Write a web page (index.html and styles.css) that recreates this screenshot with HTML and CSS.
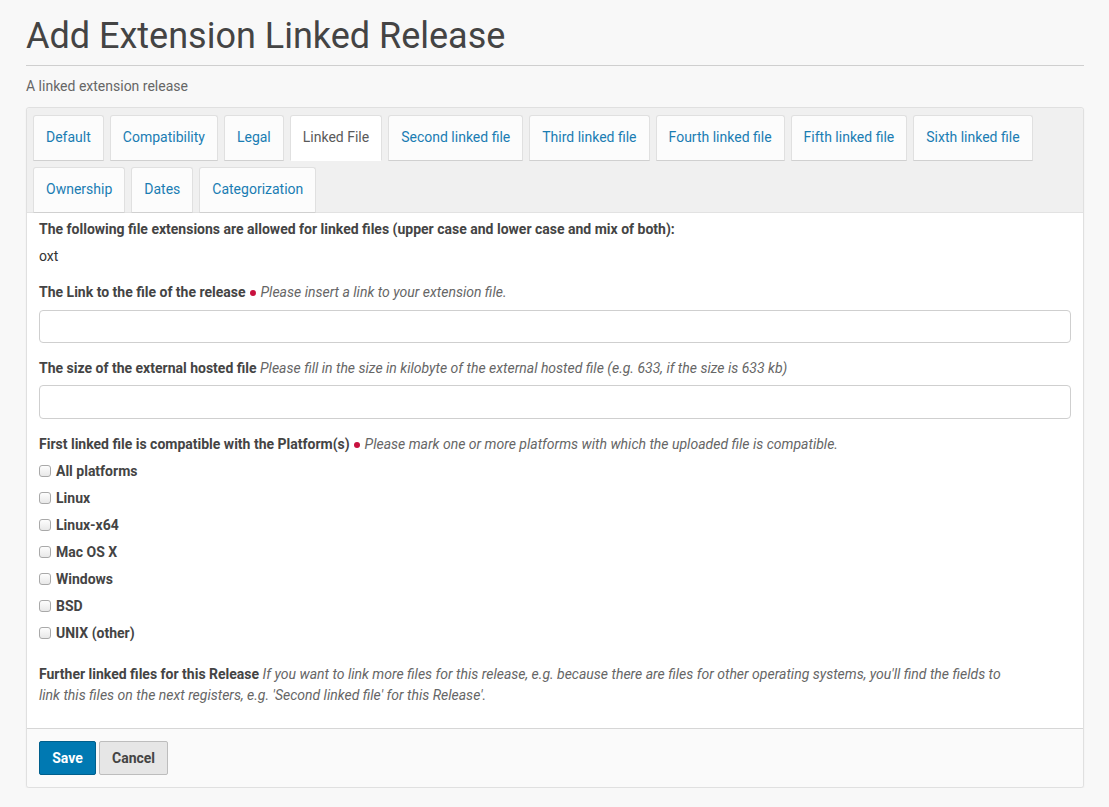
FILE: index.html
```html
<!DOCTYPE html>
<html>
<head>
<meta charset="utf-8">
<link rel="stylesheet" href="styles.css">
</head>
<body>
<div class="page">
  <h1 class="title">Add Extension Linked Release</h1>
  <p class="subtitle">A linked extension release</p>
  <div class="panel">
    <div class="tabs">
      <a class="tab">Default</a>
      <a class="tab">Compatibility</a>
      <a class="tab">Legal</a>
      <a class="tab active">Linked File</a>
      <a class="tab">Second linked file</a>
      <a class="tab">Third linked file</a>
      <a class="tab">Fourth linked file</a>
      <a class="tab">Fifth linked file</a>
      <a class="tab">Sixth linked file</a>
      <a class="tab">Ownership</a>
      <a class="tab">Dates</a>
      <a class="tab">Categorization</a>
    </div>
    <div class="content">
      <p class="label first">The following file extensions are allowed for linked files (upper case and lower case and mix of both):</p>
      <p class="oxt">oxt</p>
      <p class="label gap16">The Link to the file of the release <span class="req"></span> <em>Please insert a link to your extension file.</em></p>
      <input class="field" type="text">
      <p class="label gap15">The size of the external hosted file <em>Please fill in the size in kilobyte of the external hosted file (e.g. 633, if the size is 633 kb)</em></p>
      <input class="field field2" type="text">
      <p class="label gap15">First linked file is compatible with the Platform(s) <span class="req"></span> <em>Please mark one or more platforms with which the uploaded file is compatible.</em></p>
      <label class="check"><input type="checkbox"><span>All platforms</span></label>
      <label class="check"><input type="checkbox"><span>Linux</span></label>
      <label class="check"><input type="checkbox"><span>Linux-x64</span></label>
      <label class="check"><input type="checkbox"><span>Mac OS X</span></label>
      <label class="check"><input type="checkbox"><span>Windows</span></label>
      <label class="check"><input type="checkbox"><span>BSD</span></label>
      <label class="check"><input type="checkbox"><span>UNIX (other)</span></label>
      <p class="label further">Further linked files for this Release <em>If you want to link more files for this release, e.g. because there are files for other operating systems, you'll find the fields to link this files on the next registers, e.g. 'Second linked file' for this Release'.</em></p>
    </div>
    <div class="footer">
      <button class="btn save">Save</button>
      <button class="btn cancel">Cancel</button>
    </div>
  </div>
</div>
</body>
</html>
```
FILE: styles.css
```css
html, body {
  margin: 0;
  padding: 0;
  background: #f8f8f8;
  font-family: Roboto, "Liberation Sans", sans-serif;
  color: #333;
}
.page {
  padding: 0 25px 0 26px;
}
.title {
  margin: 16px 0 0;
  font-size: 36px;
  line-height: 40px;
  font-weight: 400;
  color: #444;
  padding-bottom: 9px;
  border-bottom: 1px solid #cfcfcf;
}
.subtitle {
  margin: 10px 0 0;
  font-size: 14px;
  line-height: 20px;
  color: #666;
}
.panel {
  margin-top: 11px;
  border: 1px solid #e0e0e0;
  border-radius: 3px;
  background: #fafafa;
  box-shadow: 0 1px 2px rgba(0,0,0,0.06);
}
.tabs {
  display: flex;
  flex-wrap: wrap;
  gap: 7px 6px;
  padding: 7px 6px 0;
  background: #f0f0f0;
  border-bottom: 1px solid #e2e2e2;
  border-radius: 3px 3px 0 0;
}
.tab {
  display: block;
  padding: 11px 12px 13px;
  font-size: 14px;
  line-height: 20px;
  color: #1a7db3;
  background: #fcfcfc;
  border: 1px solid #e0e0e0;
  border-bottom-color: #d0d0d0;
  border-radius: 3px 3px 0 0;
  margin-bottom: -1px;
}
.tab.active {
  background: #fff;
  color: #5a5a5a;
  border-bottom-color: #fff;
}
.content {
  background: #fff;
  padding: 6px 12px 22px;
  border-bottom: 1px solid #d6d6d6;
}
.label {
  margin: 0;
  font-size: 14px;
  line-height: 20px;
  font-weight: 700;
  color: #444;
}
.label em {
  font-weight: 400;
  color: #666;
}
.oxt {
  margin: 7px 0 0;
  font-size: 14px;
  line-height: 20px;
  color: #333;
}
.gap16 { margin-top: 16px; }
.gap15 { margin-top: 15px; }
.req {
  display: inline-block;
  width: 6px;
  height: 6px;
  border-radius: 50%;
  background: #c8103e;
  vertical-align: 1px;
  margin: 0 1px 0 1px;
}
.field {
  display: block;
  box-sizing: border-box;
  width: 100%;
  height: 33px;
  margin-top: 8px;
  border: 1px solid #cfcfcf;
  border-radius: 4px;
  background: #fff;
}
.field2 {
  margin-top: 7px;
  height: 34px;
}
.check {
  display: flex;
  align-items: center;
  margin-top: 7px;
  font-size: 14px;
  line-height: 20px;
  font-weight: 700;
  color: #444;
}
.check input {
  appearance: none;
  -webkit-appearance: none;
  width: 12px;
  height: 12px;
  margin: 0 5px 0 0;
  border: 1px solid #a9a9a9;
  border-radius: 3px;
  background: linear-gradient(#fdfdfd, #e8e8e8);
  box-sizing: border-box;
}
.further {
  margin-top: 21px;
  line-height: 21px;
  padding-right: 70px;
}
.footer {
  display: flex;
  gap: 3px;
  padding: 12px 12px 12px;
  background: #fafafa;
  border-radius: 0 0 3px 3px;
}
.btn {
  font-family: Roboto, "Liberation Sans", sans-serif;
  font-size: 14px;
  font-weight: 700;
  height: 34px;
  padding: 0 12px;
  border-radius: 2px;
}
.save {
  background: #0079b2;
  border: 1px solid #005f8c;
  color: #fff;
  width: 57px;
}
.cancel {
  background: #e6e6e6;
  border: 1px solid #bdbdbd;
  color: #444;
  width: 69px;
}
```
